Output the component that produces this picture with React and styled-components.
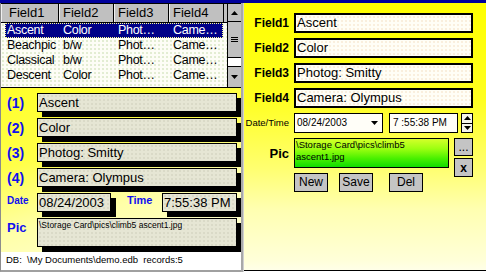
import React from 'react';
import styled, { createGlobalStyle } from 'styled-components';

const GlobalStyle = createGlobalStyle`
  html, body { margin: 0; padding: 0; background: #fff; }
  body { font-family: "Liberation Sans", Arial, sans-serif; color: #000; }
  * { box-sizing: border-box; }
`;

const dots = (c) => `radial-gradient(circle, ${c} 0.6px, transparent 0.9px)`;

const Screen = styled.div`
  width: 486px;
  height: 273px;
  overflow: hidden;
  display: flex;
  flex-direction: column;
  background: #fff;
`;

const TitleStrip = styled.div`
  flex: none;
  height: 3px;
  background: #00009c;
`;

const Panels = styled.div`
  display: flex;
  align-items: flex-start;
  height: 270px;
`;

const LeftPanel = styled.div`
  flex: none;
  width: 241px;
  height: 269px;
  display: flex;
  flex-direction: column;
  border-left: 1px solid #8c8c8c;
  border-bottom: 2px solid #a0a0a0;
`;

const ListView = styled.div`
  flex: none;
  height: 85px;
  display: flex;
  border-bottom: 1px solid #000;
`;

const Table = styled.div`
  width: 226px;
  overflow: hidden;
  background-color: #fdfdf6;
  background-image: ${dots('rgba(150,190,110,0.4)')};
  background-size: 4px 4px;
`;

const HeaderRow = styled.div`
  display: flex;
  height: 20px;
  border-top: 1px solid #000;
  border-bottom: 1px solid #000;
  background: #c0c0c0;
`;

const HeaderCell = styled.div`
  flex: none;
  width: ${(p) => p.$w}px;
  padding-left: ${(p) => p.$pad}px;
  border-right: 1px solid #000;
  box-shadow: inset 1px 0 0 #f0f0f0;
  font-size: 13px;
  line-height: 18px;
  white-space: nowrap;
`;

const HeaderFill = styled.div`
  flex: 1;
`;

const Row = styled.div`
  display: flex;
  height: 15px;
  margin: 0 4px;
  font-size: 12.5px;
  letter-spacing: -0.3px;
  line-height: 15px;
  white-space: nowrap;
  background: ${(p) => (p.$selected ? '#000088' : 'transparent')};
  color: ${(p) => (p.$selected ? '#fff' : '#000')};
  outline: ${(p) => (p.$selected ? '1px dotted #ffff90' : 'none')};
  outline-offset: -1px;
`;

const Cell = styled.div`
  flex: none;
  width: ${(p) => p.$w}px;
  padding-left: ${(p) => p.$pad}px;
  overflow: hidden;
`;

const ScrollBar = styled.div`
  flex: none;
  width: 14px;
  display: flex;
  flex-direction: column;
  border-left: 1px solid #000;
  border-top: 1px solid #000;
  background: #c0c0c0;
`;

const ScrollBtn = styled.div`
  flex: none;
  height: ${(p) => p.$h}px;
  display: flex;
  align-items: center;
  justify-content: center;
  border-bottom: ${(p) => (p.$top ? '1px solid #000' : 'none')};
  border-top: ${(p) => (p.$top ? 'none' : '1px solid #000')};
`;

const Thumb = styled.div`
  flex: none;
  height: 36px;
  display: flex;
  align-items: center;
  justify-content: center;
  border-bottom: 1px solid #000;
`;

const Track = styled.div`
  flex: 1;
  background: #fff;
`;

const Form = styled.div`
  flex: 1;
  display: grid;
  grid-template-columns: 30px 200px;
  grid-template-rows: repeat(5, 19px) 29px;
  row-gap: 6px;
  align-content: start;
  padding: 5px 0 0 6px;
  background: linear-gradient(165deg, #ffff2a 0%, #ffff48 35%, #ffffa8 65%, #ffffdc 100%);
`;

const BlueLabel = styled.div`
  color: #1010f0;
  font-weight: bold;
  font-size: ${(p) => p.$size}px;
  line-height: 1;
  white-space: nowrap;
  align-self: ${(p) => (p.$top ? 'start' : 'center')};
  margin-top: ${(p) => p.$mt || 0}px;
  margin-left: ${(p) => p.$ml || 0}px;
`;

const InsetBox = styled.div`
  flex: none;
  width: ${(p) => (p.$w ? `${p.$w}px` : 'auto')};
  height: ${(p) => p.$h || 19}px;
  border: 1px solid #000;
  box-shadow: 5px 5px 0 #000;
  background-color: #e6e6d4;
  background-image: ${dots('rgba(170,170,150,0.3)')};
  background-size: 4px 4px;
  font-size: ${(p) => p.$fs || 13}px;
  line-height: ${(p) => p.$lh || 17}px;
  padding-left: 1px;
  white-space: nowrap;
  overflow: hidden;
`;

const DateTimeLeft = styled.div`
  display: flex;
  align-items: flex-start;
`;

const TimeSlot = styled.div`
  margin-left: auto;
`;

const Status = styled.div`
  flex: none;
  height: 18px;
  padding: 3px 0 0 5px;
  font-size: 9.5px;
  line-height: 10px;
  white-space: pre;
  background: #fff;
`;

const Divider = styled.div`
  flex: none;
  width: 3px;
  height: 269px;
  background: #a8a8a8;
  border-right: 1px solid #d0d0d0;
`;

const RightPanel = styled.div`
  flex: 1;
  height: 268px;
  border-bottom: 1px solid #000;
  background: linear-gradient(180deg, #ffff00 0%, #ffff20 36%, #ffff70 62%, #ffffb0 77%, #ffffd8 96%, #ffffe8 100%);
  display: grid;
  grid-template-columns: 45px 155px 19px;
  grid-template-rows: repeat(5, 20px) 30px 19px;
  column-gap: 5px;
  row-gap: 5px;
  align-content: start;
  padding-top: 10px;
`;

const RightLabel = styled.div`
  justify-self: end;
  align-self: center;
  font-weight: ${(p) => (p.$regular ? 'normal' : 'bold')};
  font-size: ${(p) => p.$size}px;
  line-height: 1;
  white-space: nowrap;
`;

const EditBox = styled.div`
  grid-column: 2 / 4;
  border: 2px solid #000;
  background-color: #fffef6;
  background-image: ${dots('rgba(230,180,120,0.3)')};
  background-size: 4px 4px;
  font-size: 13px;
  line-height: 16px;
  padding-left: 1px;
  white-space: nowrap;
  overflow: hidden;
`;

const DateTimeRight = styled.div`
  grid-column: 2 / 4;
  display: flex;
  align-items: stretch;
`;

const Combo = styled.div`
  flex: none;
  width: ${(p) => p.$w}px;
  margin-left: ${(p) => p.$ml || 0}px;
  border: 1px solid #000;
  background: #fffef8;
  font-size: 10px;
  line-height: 18px;
  padding-left: ${(p) => p.$pad}px;
  display: flex;
  align-items: center;
  justify-content: space-between;
  padding-right: 4px;
  white-space: pre;
`;

const Spin = styled.div`
  flex: none;
  width: 12px;
  margin-left: 3px;
  border: 1px solid #000;
  background: #f4f4ec;
  display: flex;
  flex-direction: column;
`;

const SpinHalf = styled.div`
  flex: 1;
  display: flex;
  align-items: center;
  justify-content: center;
  border-top: ${(p) => (p.$lower ? '1px solid #000' : 'none')};
`;

const PicBox = styled.div`
  border: 1px solid #000;
  background: linear-gradient(180deg, #d4ff2a 0%, #9cff10 35%, #48f000 70%, #10dc00 100%);
  font-size: 9.5px;
  line-height: 12px;
  padding: 0 0 0 1px;
`;

const SideButtons = styled.div`
  grid-row: span 2;
  align-self: start;
  display: flex;
  flex-direction: column;
  gap: 2px;
`;

const SmallBtn = styled.div`
  height: ${(p) => p.$h}px;
  border: 1px solid #000;
  background: #c4c4c4;
  display: flex;
  align-items: center;
  justify-content: center;
  font-size: 12px;
  font-weight: ${(p) => (p.$bold ? 'bold' : 'normal')};
  line-height: 1;
`;

const ButtonRow = styled.div`
  grid-column: 2 / 3;
  display: flex;
  gap: 11px;
`;

const PushBtn = styled.div`
  flex: none;
  width: 34px;
  height: 19px;
  margin-left: ${(p) => p.$ml || 0}px;
  border: 1px solid #000;
  background: #c4c4c4;
  font-size: 12px;
  line-height: 17px;
  text-align: center;
`;

const UpArrow = () => (
  <svg width="7" height="4" viewBox="0 0 7 4"><polygon points="0,4 7,4 3.5,0" fill="#000" /></svg>
);
const DownArrow = () => (
  <svg width="7" height="4" viewBox="0 0 7 4"><polygon points="0,0 7,0 3.5,4" fill="#000" /></svg>
);
const Grip = () => (
  <svg width="7" height="5" viewBox="0 0 7 5">
    <rect x="0" y="0" width="7" height="1" fill="#000" />
    <rect x="0" y="2" width="7" height="1" fill="#000" />
    <rect x="0" y="4" width="7" height="1" fill="#000" />
  </svg>
);

const headers = [
  { t: 'Field1', w: 58, pad: 8 },
  { t: 'Field2', w: 55, pad: 4 },
  { t: 'Field3', w: 55, pad: 4 },
  { t: 'Field4', w: 55, pad: 4 },
];

const cols = [
  { w: 53, pad: 2 },
  { w: 55, pad: 5 },
  { w: 55, pad: 5 },
  { w: 55, pad: 5 },
];

const records = [
  ['Ascent', 'Color', 'Phot…', 'Came…'],
  ['Beachpic', 'b/w', 'Phot…', 'Came…'],
  ['Classical', 'b/w', 'Phot…', 'Came…'],
  ['Descent', 'Color', 'Phot…', 'Came…'],
];

const fields = ['Ascent', 'Color', 'Photog: Smitty', 'Camera: Olympus'];

export default function App() {
  return (
    <>
      <GlobalStyle />
      <Screen>
        <TitleStrip />
        <Panels>
          <LeftPanel>
            <ListView>
              <Table>
                <HeaderRow>
                  {headers.map((h) => (
                    <HeaderCell key={h.t} $w={h.w} $pad={h.pad}>{h.t}</HeaderCell>
                  ))}
                  <HeaderFill />
                </HeaderRow>
                {records.map((r, i) => (
                  <Row key={r[0]} $selected={i === 0}>
                    {r.map((c, j) => (
                      <Cell key={j} $w={cols[j].w} $pad={cols[j].pad}>{c}</Cell>
                    ))}
                  </Row>
                ))}
              </Table>
              <ScrollBar>
                <ScrollBtn $h={18} $top><UpArrow /></ScrollBtn>
                <Thumb><Grip /></Thumb>
                <Track />
                <ScrollBtn $h={21}><DownArrow /></ScrollBtn>
              </ScrollBar>
            </ListView>
            <Form>
              {fields.map((f, i) => (
                <React.Fragment key={f}>
                  <BlueLabel $size={14}>({i + 1})</BlueLabel>
                  <InsetBox>{f}</InsetBox>
                </React.Fragment>
              ))}
              <BlueLabel $size={10} $top $mt={3}>Date</BlueLabel>
              <DateTimeLeft>
                <InsetBox $w={74}>08/24/2003</InsetBox>
                <BlueLabel $size={11} $top $mt={2} $ml={16}>Time</BlueLabel>
                <TimeSlot>
                  <InsetBox $w={75}>7:55:38 PM</InsetBox>
                </TimeSlot>
              </DateTimeLeft>
              <BlueLabel $size={13} $top $mt={3}>Pic</BlueLabel>
              <InsetBox $h={29} $fs={8.5} $lh={12}>\Storage Card\pics\climb5 ascent1.jpg</InsetBox>
            </Form>
            <Status>{'DB:  \\My Documents\\demo.edb  records:5'}</Status>
          </LeftPanel>
          <Divider />
          <RightPanel>
            {fields.map((f, i) => (
              <React.Fragment key={f}>
                <RightLabel $size={12}>Field{i + 1}</RightLabel>
                <EditBox>{f}</EditBox>
              </React.Fragment>
            ))}
            <RightLabel $size={9.5} $regular>Date/Time</RightLabel>
            <DateTimeRight>
              <Combo $w={89} $pad={2}>
                <span>08/24/2003</span>
                <DownArrow />
              </Combo>
              <Combo $w={69} $ml={6} $pad={3}>7 :55:38 PM</Combo>
              <Spin>
                <SpinHalf><UpArrow /></SpinHalf>
                <SpinHalf $lower><DownArrow /></SpinHalf>
              </Spin>
            </DateTimeRight>
            <RightLabel $size={13}>Pic</RightLabel>
            <PicBox>\Storage Card\pics\climb5<br />ascent1.jpg</PicBox>
            <SideButtons>
              <SmallBtn $h={18}>...</SmallBtn>
              <SmallBtn $h={19} $bold>x</SmallBtn>
            </SideButtons>
            <ButtonRow>
              <PushBtn>New</PushBtn>
              <PushBtn>Save</PushBtn>
              <PushBtn $ml={5}>Del</PushBtn>
            </ButtonRow>
          </RightPanel>
        </Panels>
      </Screen>
    </>
  );
}
